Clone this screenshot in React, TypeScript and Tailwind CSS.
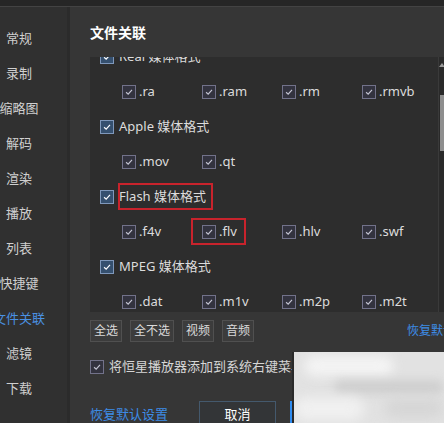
import React from 'react';

const FONT = "font-['Noto_Sans','Noto_Sans_CJK_SC',sans-serif]";

const navItems = ['常规', '录制', '缩略图', '解码', '渲染', '播放', '列表', '快捷键', '文件关联', '滤镜', '下载'];

type Group = { name: string; exts: string[]; flagged?: boolean; flaggedExt?: string };

const groups: Group[] = [
  { name: 'Real 媒体格式', exts: ['.ra', '.ram', '.rm', '.rmvb'] },
  { name: 'Apple 媒体格式', exts: ['.mov', '.qt'] },
  { name: 'Flash 媒体格式', exts: ['.f4v', '.flv', '.hlv', '.swf'], flagged: true, flaggedExt: '.flv' },
  { name: 'MPEG 媒体格式', exts: ['.dat', '.m1v', '.m2p', '.m2t'] },
];

const Check = ({ strong = false }: { strong?: boolean }) => (
  <span
    className={`flex h-[14px] w-[14px] shrink-0 items-center justify-center border ${
      strong ? 'border-[#7f98bb] bg-[#35506f]' : 'border-[#72728a] bg-[#33333f]'
    }`}
  >
    <svg viewBox="0 0 12 12" className="h-[10px] w-[10px]">
      <path d="M2.5 6.3 L5 8.6 L9.6 3.4" fill="none" stroke={strong ? '#ffffff' : '#c4c4d2'} strokeWidth="1.4" />
    </svg>
  </span>
);

export default function App() {
  return (
    <div className={`relative flex h-[423px] w-[444px] flex-col overflow-hidden bg-[#363636] ${FONT}`}>
      {/* window top edge */}
      <div className="h-[7px] shrink-0 border-b border-[#434343] bg-[#262626]" />

      <div className="flex min-h-0 flex-1">
        {/* settings nav */}
        <div className="flex w-[70px] shrink-0 flex-col overflow-hidden border-r-[3px] border-[#2b2b2b] bg-[#303030] pt-[14px]">
          {navItems.map((item) => (
            <div key={item} className="flex h-[35px] w-[38px] shrink-0 items-center justify-center">
              <span
                className={`whitespace-nowrap text-[13px] ${
                  item === '文件关联' ? 'text-[#4a90e2]' : 'text-[#cfcfcf]'
                }`}
              >
                {item}
              </span>
            </div>
          ))}
        </div>

        {/* file association page */}
        <div className="flex min-w-0 flex-1 flex-col pl-[20px]">
          <div className="flex h-[50px] shrink-0 items-center">
            <span className="text-[14px] font-bold text-white">文件关联</span>
          </div>

          <div className="relative h-[255px] shrink-0 overflow-hidden bg-[#2d2d2d]">
            <div className="-mt-[18px]">
              {groups.map((g) => (
                <React.Fragment key={g.name}>
                  <div className="relative flex h-[35px] items-center gap-[5px] pl-[10px]">
                    <Check strong />
                    <span className="whitespace-nowrap text-[13px] text-[#dcdcdc]">{g.name}</span>
                    {g.flagged && (
                      <span className="absolute left-[28px] top-[4px] h-[27px] w-[95px] border-2 border-[#c8232c]" />
                    )}
                  </div>
                  <div className="relative grid h-[35px] grid-cols-[80px_80px_80px_80px] items-center pl-[32px]">
                    {g.exts.map((ext) => (
                      <div key={ext} className="flex items-center gap-[3px]">
                        <Check />
                        <span className="text-[13px] text-[#dcdcdc]">{ext}</span>
                      </div>
                    ))}
                    {g.flaggedExt && (
                      <span className="absolute left-[101px] top-[4px] h-[27px] w-[55px] border-2 border-[#c8232c]" />
                    )}
                  </div>
                </React.Fragment>
              ))}
            </div>

            {/* scrollbar */}
            <div className="absolute right-0 top-0 h-full w-[6px] border-l border-[#3a3a3a] bg-[#2a2a2a]">
              <div className="mx-auto mt-[6px] h-0 w-0 border-x-[3px] border-b-[4px] border-x-transparent border-b-[#9a9a9a]" />
              <div className="ml-auto mt-[28px] h-[56px] w-[4px] bg-[#8e8e8e]" />
            </div>
          </div>

          <div className="mt-[8px] flex h-[22px] shrink-0 items-center gap-[8px] whitespace-nowrap">
            {['全选', '全不选', '视频', '音频'].map((b) => (
              <button
                key={b}
                className="h-[22px] border border-[#505050] bg-[#3c3c3c] px-[3px] text-[12px] text-[#dadada]"
              >
                {b}
              </button>
            ))}
            <span className="ml-[145px] text-[12px] text-[#3d8ce6]">恢复默认设置</span>
          </div>

          <div className="mt-[18px] flex h-[14px] shrink-0 items-center gap-[5px] whitespace-nowrap">
            <Check />
            <span className="text-[13px] text-[#d6d6d6]">将恒星播放器添加到系统右键菜单</span>
          </div>

          <div className="mt-[27px] flex shrink-0 items-start whitespace-nowrap">
            <span className="mt-[4px] text-[13px] text-[#3d8ce6]">恢复默认设置</span>
            <button className="ml-[31px] h-[28px] w-[77px] border border-[#44596d] bg-[#333537] text-[13px] text-white">
              取消
            </button>
            <button className="ml-[14px] h-[28px] w-[77px] bg-[#2f8cf0] text-[13px] text-white">确定</button>
          </div>
        </div>
      </div>

      {/* blurred light patch over the lower right corner */}
      <div className="absolute left-[292px] top-[352px] h-[71px] w-[152px] overflow-hidden border-l-[2px] border-[#2a2a2a] bg-[#e2e2e2]">
        <div className="absolute left-[10px] top-[4px] h-[20px] w-[90px] rounded-full bg-[#f4f4f4] blur-[6px]" />
        <div className="absolute left-[40px] top-[28px] h-[14px] w-[110px] rounded-full bg-[#cfcfcf] blur-[5px]" />
        <div className="absolute left-[0px] top-[45px] h-[24px] w-[70px] rounded-full bg-[#f0f0f0] blur-[6px]" />
        <div className="absolute left-[90px] top-[46px] h-[20px] w-[60px] rounded-full bg-[#d6d6d6] blur-[6px]" />
      </div>
    </div>
  );
}
